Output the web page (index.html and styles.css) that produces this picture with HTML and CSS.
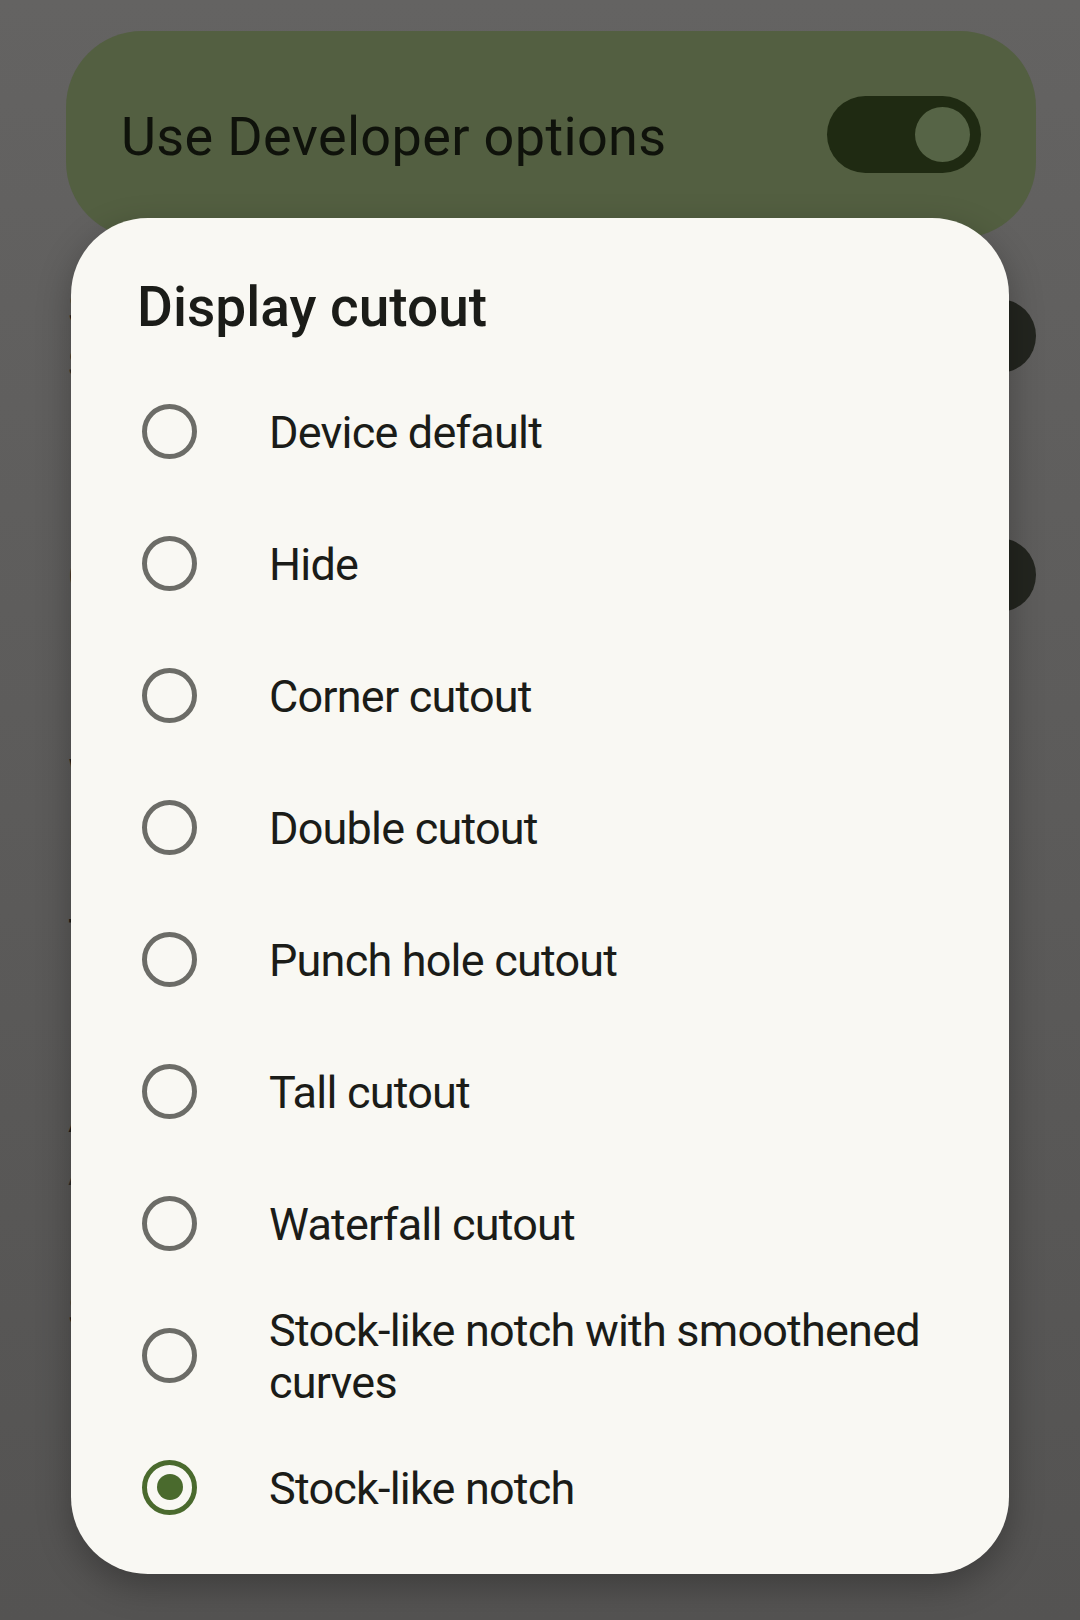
FILE: index.html
```html
<!DOCTYPE html>
<html lang="en">
<head>
<meta charset="utf-8">
<title>Display cutout</title>
<link rel="stylesheet" href="styles.css">
</head>
<body>
<div class="screen">
  <div class="main-switch">
    <span class="main-label">Use Developer options</span>
    <span class="switch main"><span class="thumb"></span></span>
  </div>

  <div class="prefs">
    <div class="pref r1">
      <div class="pref-text">
        <div class="pref-title">Stay awake</div>
        <div class="pref-summary">Screen will never sleep while charging</div>
      </div>
      <span class="switch bg"></span>
    </div>
    <div class="pref r2">
      <div class="pref-text">
        <div class="pref-title">Enable Bluetooth HCI snoop log</div>
        <div class="pref-summary">Capture Bluetooth packets</div>
        <div class="pref-summary">Disabled</div>
      </div>
      <span class="switch bg"></span>
    </div>
    <div class="pref r3">
      <div class="pref-text">
        <div class="pref-title">Wireless debugging</div>
        <div class="pref-summary">Debug mode when Wi‑Fi is connected</div>
      </div>
    </div>
    <div class="pref r4">
      <div class="pref-text">
        <div class="pref-title">Take bug report</div>
        <div class="pref-summary">Interactive report</div>
      </div>
    </div>
    <div class="pref r5">
      <div class="pref-text">
        <div class="pref-title">Animator duration scale</div>
        <div class="pref-summary">Animation scale 1x</div>
      </div>
    </div>
    <div class="pref r6">
      <div class="pref-text">
        <div class="pref-title">Select USB configuration</div>
        <div class="pref-summary">File transfer</div>
      </div>
    </div>
  </div>

  <div class="dialog">
    <h1 class="dialog-title">Display cutout</h1>
    <ul class="options">
      <li class="option"><span class="radio"></span><span class="option-label">Device default</span></li>
      <li class="option"><span class="radio"></span><span class="option-label">Hide</span></li>
      <li class="option"><span class="radio"></span><span class="option-label">Corner cutout</span></li>
      <li class="option"><span class="radio"></span><span class="option-label">Double cutout</span></li>
      <li class="option"><span class="radio"></span><span class="option-label">Punch hole cutout</span></li>
      <li class="option"><span class="radio"></span><span class="option-label">Tall cutout</span></li>
      <li class="option"><span class="radio"></span><span class="option-label">Waterfall cutout</span></li>
      <li class="option"><span class="radio"></span><span class="option-label">Stock-like notch with smoothened curves</span></li>
      <li class="option selected"><span class="radio"></span><span class="option-label">Stock-like notch</span></li>
    </ul>
  </div>
</div>
</body>
</html>
```

FILE: styles.css
```css
* { box-sizing: border-box; }

html, body {
  margin: 0;
  padding: 0;
}

body {
  font-family: Roboto, "Noto Sans", "Liberation Sans", sans-serif;
  background: #5d5c5b;
}

.screen {
  position: relative;
  width: 1080px;
  height: 1620px;
  overflow: hidden;
  background: linear-gradient(#646362, #5c5b5a 50%, #545352);
}

/* Main switch card */
.main-switch {
  margin: 31px 44px 0 66px;
  height: 207px;
  border-radius: 76px;
  background: #535f41;
  display: flex;
  align-items: center;
  justify-content: space-between;
  padding: 0 55px 0 55px;
}

.main-label {
  font-size: 54px;
  line-height: 64px;
  letter-spacing: 0.35px;
  color: #0f120b;
  margin-top: 4px;
}

.switch {
  position: relative;
  display: block;
  width: 154px;
  height: 77px;
  border-radius: 39px;
  background: #1f2a12;
  flex: none;
}

.switch.main .thumb {
  position: absolute;
  width: 55px;
  height: 55px;
  border-radius: 50%;
  background: #566446;
  right: 11px;
  top: 11px;
}

.switch.bg {
  width: 154px;
  height: 74px;
  background: #23251f;
  margin-right: 44px;
}

/* Background (dimmed) preference rows */
.prefs {
  padding-top: 12px;
}

.pref {
  display: flex;
  align-items: center;
  justify-content: space-between;
  padding-left: 68px;
}

.pref.r1 { height: 172px; }
.pref.r2 { height: 306px; }
.pref.r3 { height: 150px; }
.pref.r4 { height: 170px; }
.pref.r5 { height: 190px; }
.pref.r6 { height: 200px; }

.pref-title {
  font-size: 46px;
  line-height: 58px;
  color: #1a1a18;
}

.pref-summary {
  font-size: 40px;
  line-height: 54px;
  color: #2a2a28;
}

/* Dialog */
.dialog {
  position: absolute;
  left: 71px;
  top: 218px;
  width: 938px;
  height: 1356px;
  background: #f9f8f3;
  border-radius: 77px;
  box-shadow: 0 12px 34px rgba(0, 0, 0, 0.28);
  padding-top: 57px;
}

.dialog-title {
  margin: 0;
  padding-left: 66px;
  font-size: 55px;
  line-height: 64px;
  font-weight: 500;
  color: #1b1c18;
}

.options {
  list-style: none;
  margin: 26px 0 0 0;
  padding: 0 50px 0 71px;
}

.option {
  display: flex;
  align-items: center;
  min-height: 132px;
}

.radio {
  flex: none;
  width: 55px;
  height: 55px;
  border-radius: 50%;
  border: 5px solid #6c6c67;
  position: relative;
}

.option.selected .radio {
  border-color: #4a6a2d;
}

.option.selected .radio::after {
  content: "";
  position: absolute;
  left: 50%;
  top: 50%;
  width: 26px;
  height: 26px;
  margin: -13px 0 0 -13px;
  border-radius: 50%;
  background: #4a6a2d;
}

.option-label {
  margin-left: 72px;
  padding-top: 3px;
  font-size: 45px;
  line-height: 52px;
  letter-spacing: -0.8px;
  color: #1b1c18;
}
```
